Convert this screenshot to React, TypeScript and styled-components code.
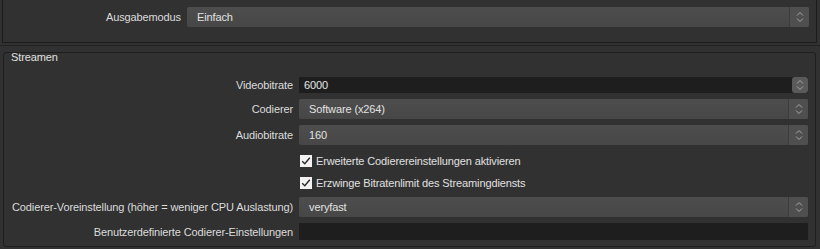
import React from "react";
import styled, { createGlobalStyle } from "styled-components";

const GlobalStyle = createGlobalStyle`
  html, body {
    margin: 0;
    padding: 0;
    background: #313131;
  }
  body {
    font-family: "Liberation Sans", Arial, sans-serif;
    font-size: 11px;
    letter-spacing: -0.12px;
    color: #d9d9d9;
  }
`;

const Page = styled.div`
  width: 820px;
  height: 249px;
  overflow: hidden;
  background: #313131;
`;

const TopGroup = styled.div`
  box-sizing: border-box;
  height: 43px;
  margin: 0 3px 0 2px;
  padding: 7px 7px 0 0;
  border: 1px solid #1c1c1c;
  border-top: none;
`;

const Divider = styled.div`
  height: 1px;
  margin-top: 2px;
  background: #222;
`;

const Form = styled.div<{ $label: number }>`
  display: grid;
  grid-template-columns: ${(p) => p.$label}px 1fr;
  column-gap: 6px;
  row-gap: 6px;
  align-items: center;
`;

const Label = styled.div`
  text-align: right;
  white-space: nowrap;
  color: #dcdcdc;
`;

const StreamGroup = styled.div`
  box-sizing: border-box;
  height: 195px;
  margin: 6px 4px 0 3px;
  padding: 0 7px 0 0;
  border: 1px solid #1e1e1e;
  border-radius: 3px;
`;

const Title = styled.div`
  margin: -3px 0 0 7px;
  line-height: 14px;
  color: #e0e0e0;
`;

const StreamForm = styled(Form)`
  margin-top: 13px;
`;

const ComboBox = styled.div`
  display: flex;
  height: 20px;
  border-radius: 2px;
  background: linear-gradient(#4d4d4d, #474747);
  color: #e2e2e2;
  overflow: hidden;
`;

const ComboText = styled.div<{ $pad: number }>`
  flex: 1;
  line-height: 20px;
  padding-left: ${(p) => p.$pad}px;
`;

const ArrowBox = styled.div`
  width: 19px;
  display: flex;
  align-items: center;
  justify-content: center;
  border-left: 1px solid #3c3c3c;
  background: #4f4f4f;
`;

const SpinRow = styled.div`
  display: flex;
  height: 16px;
  background: #1e1e1e;
`;

const SpinText = styled.div`
  flex: 1;
  line-height: 16px;
  padding-left: 5px;
  color: #e6e6e6;
`;

const SpinButton = styled.div`
  width: 16px;
  display: flex;
  align-items: center;
  justify-content: center;
  border-radius: 3px;
  background: #5a5a5a;
`;

const TextField = styled.div`
  height: 17px;
  background: #1e1e1e;
`;

const CheckRow = styled.label<{ $shift?: number }>`
  grid-column: 2;
  box-sizing: border-box;
  display: flex;
  align-items: center;
  gap: 4px;
  height: 17px;
  padding-top: ${(p) => p.$shift ?? 0}px;
  color: #e0e0e0;
`;

const Box = styled.span`
  width: 12px;
  height: 12px;
  margin-left: 1px;
  display: flex;
  align-items: center;
  justify-content: center;
  background: #f2f2f2;
`;

const Chevrons = () => (
  <svg width="8" height="12" viewBox="0 0 8 12">
    <path d="M1 4.5 L4 1.5 L7 4.5" fill="none" stroke="#a8a8a8" strokeWidth="1" />
    <path d="M1 7.5 L4 10.5 L7 7.5" fill="none" stroke="#a8a8a8" strokeWidth="1" />
  </svg>
);

const Combo = ({ text, pad = 10 }: { text: string; pad?: number }) => (
  <ComboBox>
    <ComboText $pad={pad}>{text}</ComboText>
    <ArrowBox>
      <Chevrons />
    </ArrowBox>
  </ComboBox>
);

const Check = ({ text, shift }: { text: string; shift?: number }) => (
  <CheckRow $shift={shift}>
    <Box>
      <svg width="10" height="10" viewBox="0 0 10 10">
        <path d="M1.2 5.2 L3.8 7.8 L8.8 1.8" fill="none" stroke="#2a2a2a" strokeWidth="1.4" />
      </svg>
    </Box>
    {text}
  </CheckRow>
);

export default function App() {
  return (
    <Page>
      <GlobalStyle />
      <TopGroup>
        <Form $label={178}>
          <Label>Ausgabemodus</Label>
          <Combo text="Einfach" />
        </Form>
      </TopGroup>
      <Divider />
      <StreamGroup>
        <Title>Streamen</Title>
        <StreamForm $label={289}>
          <Label>Videobitrate</Label>
          <SpinRow>
            <SpinText>6000</SpinText>
            <SpinButton>
              <Chevrons />
            </SpinButton>
          </SpinRow>

          <Label>Codierer</Label>
          <Combo text="Software (x264)" />

          <Label>Audiobitrate</Label>
          <Combo text="160" />

          <Check text="Erweiterte Codierereinstellungen aktivieren" shift={2} />
          <Check text="Erzwinge Bitratenlimit des Streamingdiensts" />

          <Label>Codierer-Voreinstellung (höher = weniger CPU Auslastung)</Label>
          <Combo text="veryfast" />

          <Label>Benutzerdefinierte Codierer-Einstellungen</Label>
          <TextField />
        </StreamForm>
      </StreamGroup>
    </Page>
  );
}
